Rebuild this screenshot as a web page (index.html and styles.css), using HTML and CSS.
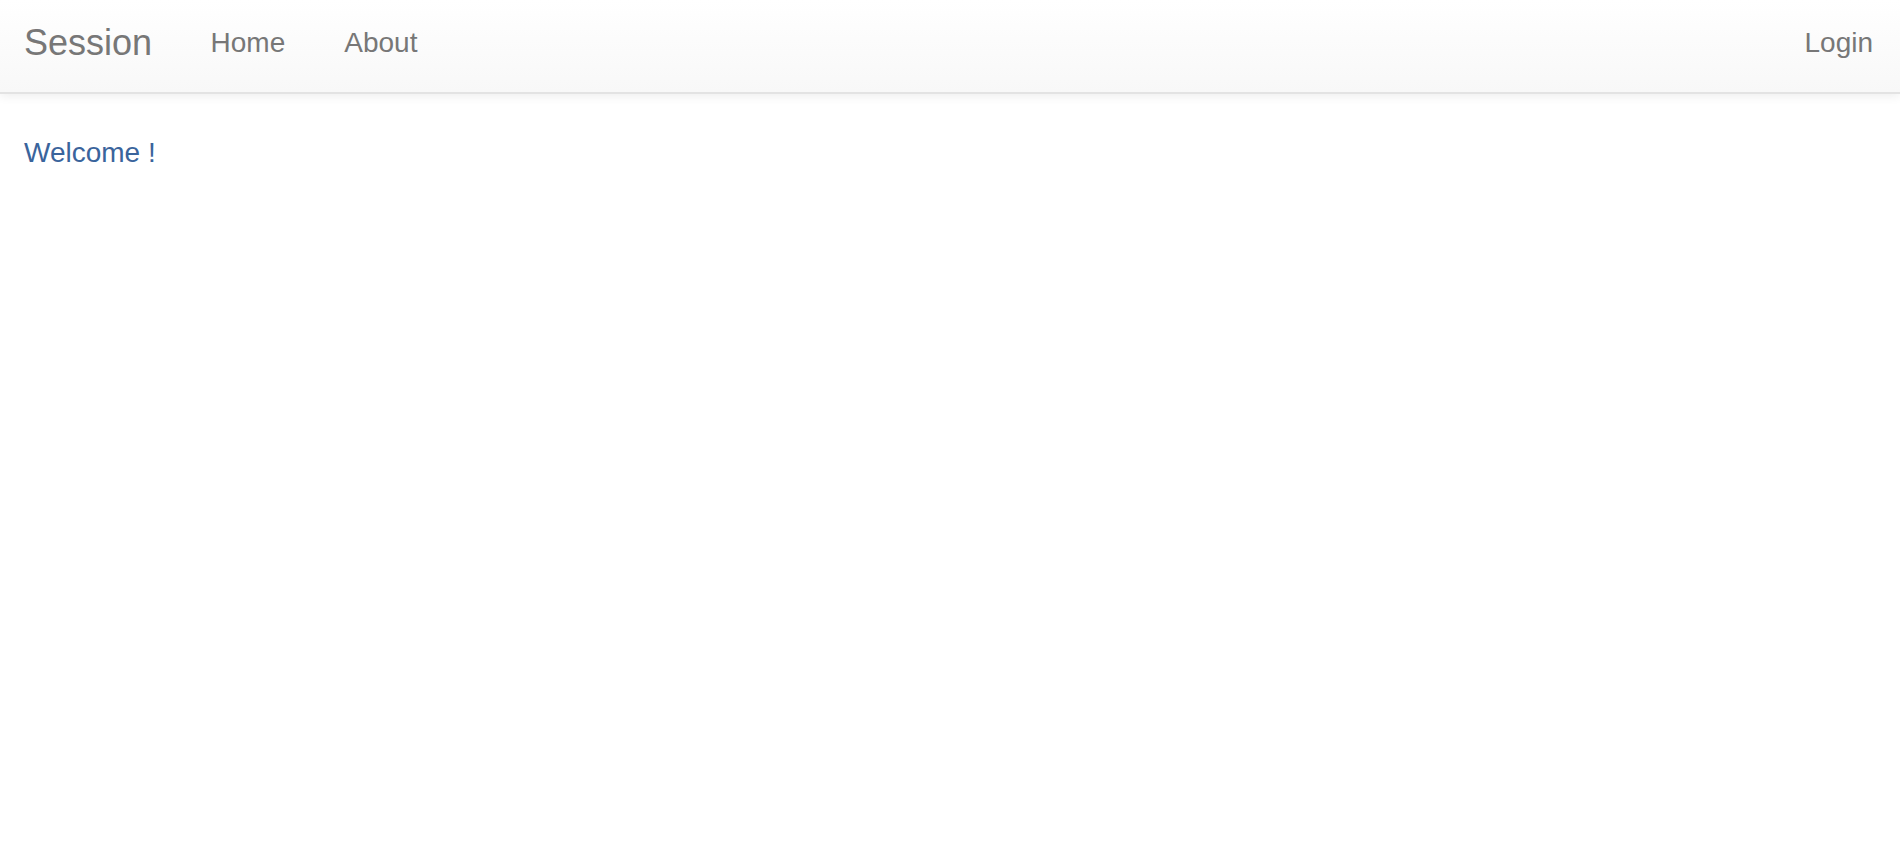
FILE: index.html
```html
<!DOCTYPE html>
<html lang="en">
<head>
<meta charset="utf-8">
<title>Session</title>
<link rel="stylesheet" href="styles.css">
</head>
<body>
<nav class="navbar">
  <a class="brand" href="#">Session</a>
  <ul class="nav">
    <li><a href="#">Home</a></li>
    <li><a href="#">About</a></li>
  </ul>
  <ul class="nav nav-right">
    <li><a href="#">Login</a></li>
  </ul>
</nav>
<main class="content">
  <p class="welcome">Welcome !</p>
</main>
</body>
</html>
```
FILE: styles.css
```css
html, body {
  margin: 0;
  padding: 0;
  background: #fff;
  font-family: "Liberation Sans", Arial, Helvetica, sans-serif;
}
a { text-decoration: none; }
.navbar {
  box-sizing: border-box;
  height: 94px;
  display: flex;
  align-items: center;
  padding: 0 27px 7px 24px;
  background: linear-gradient(to bottom, #ffffff 0%, #f8f8f8 100%);
  border-bottom: 2px solid #e3e3e3;
  box-shadow: 0 2px 10px rgba(0, 0, 0, 0.075);
}
.brand {
  font-size: 36px;
  line-height: 40px;
  color: #777;
  margin-right: 29px;
}
.nav {
  list-style: none;
  margin: 0;
  padding: 0;
  display: flex;
}
.nav a {
  display: block;
  font-size: 28px;
  line-height: 40px;
  color: #777;
  padding: 0 29.5px;
}
.nav-right { margin-left: auto; }
.nav-right a { padding: 0; }
.content {
  padding: 39px 24px 0;
}
.welcome {
  margin: 0;
  font-size: 28px;
  line-height: 40px;
  color: #3a649c;
}
```
